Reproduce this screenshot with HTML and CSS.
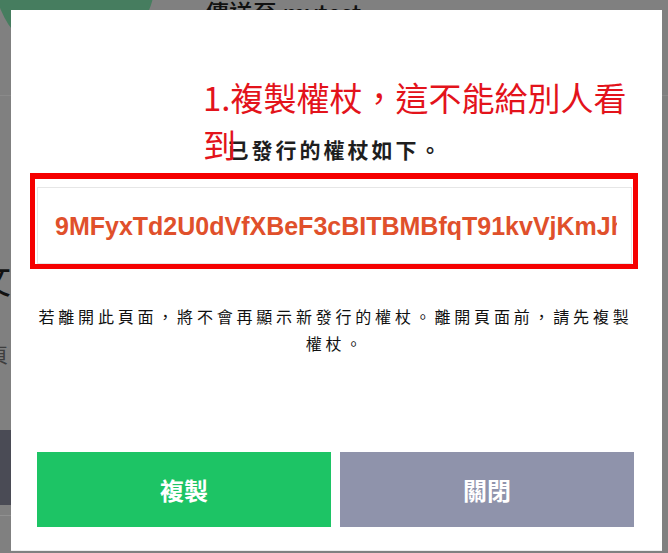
FILE: index.html
```html
<!DOCTYPE html>
<html lang="zh-Hant">
<head>
<meta charset="utf-8">
<title>權杖</title>
<link rel="stylesheet" href="styles.css">
</head>
<body>
<div class="page">
  <header class="page-head">
    <div class="avatar"></div>
    <h1 class="page-title">傳送至 mytest</h1>
  </header>
  <main class="page-body">
    <div class="big">文</div>
    <div class="sub">頁</div>
    <div class="bar"></div>
    <div class="rule"></div>
  </main>
</div>
<div class="modal">
  <h2 class="modal-title">已發行的權杖如下。</h2>
  <div class="token"><div class="token-text">9MFyxTd2U0dVfXBeF3cBITBMBfqT91kvVjKmJhQ2xLw8pZr</div></div>
  <p class="desc">若離開此頁面，將不會再顯示新發行的權杖。離開頁面前，請先複製權杖。</p>
  <div class="actions">
    <button class="btn btn-copy">複製</button>
    <button class="btn btn-close">關閉</button>
  </div>
  <p class="note">1.複製權杖，這不能給別人看<br>到</p>
  <div class="mark"></div>
</div>
</body>
</html>
```

FILE: styles.css
```css
html, body {
  margin: 0;
  padding: 0;
}
body {
  width: 668px;
  height: 553px;
  overflow: hidden;
  background: #808080;
  font-family: "Noto Sans CJK TC", "Noto Sans", sans-serif;
  position: relative;
}
.page {
  height: 553px;
}
.page-head {
  height: 95px;
  border-bottom: 1px solid #8a8a8a;
  display: flex;
  align-items: flex-start;
}
.avatar {
  flex: none;
  width: 160px;
  height: 160px;
  margin-top: -100px;
  margin-left: -5px;
  border-radius: 50%;
  background: #467d5f;
}
.page-title {
  margin: -4px 0 0 50px;
  font-size: 24px;
  line-height: 32px;
  font-weight: 500;
  color: #111;
}
.page-body {
  display: flex;
  flex-direction: column;
  padding-top: 160px;
}
.big {
  margin-left: -25px;
  font-size: 36px;
  line-height: 44px;
  color: #111;
}
.sub {
  margin: 42px 0 0 -12px;
  font-size: 20px;
  line-height: 26px;
  color: #3e3e3e;
}
.bar {
  margin-top: 62px;
  height: 75px;
  width: 40px;
  background: #4a4b55;
}
.rule {
  margin-top: 10px;
  height: 1px;
  width: 40px;
  background: #909090;
}
.modal {
  position: absolute;
  left: 11px;
  top: 10px;
  width: 651px;
  height: 541px;
  box-sizing: border-box;
  background: #fff;
  border-bottom: 1px solid #ececec;
  padding: 125px 28px 23px 26px;
  display: flex;
  flex-direction: column;
}
.modal-title {
  margin: 0;
  text-align: center;
  font-size: 21px;
  line-height: 28px;
  font-weight: bold;
  letter-spacing: 3px;
  color: #1e1e1e;
}
.token {
  margin: 24px 2px 0 0;
  height: 77px;
  box-sizing: border-box;
  border: 1px solid #e6e6e6;
  padding: 0 14px 0 17px;
  display: flex;
  align-items: center;
}
.token-text {
  width: 100%;
  overflow: hidden;
  white-space: nowrap;
  font-family: "Liberation Sans", Arial, sans-serif;
  font-weight: bold;
  font-size: 25px;
  line-height: 30px;
  color: #e0502b;
}
.desc {
  margin: 39px 0 0;
  text-align: center;
  font-size: 16px;
  line-height: 27px;
  letter-spacing: 3.8px;
  color: #111;
}
.actions {
  margin-top: auto;
  display: flex;
  gap: 9px;
}
.btn {
  flex: 1;
  height: 75px;
  border: 0;
  padding: 0;
  font-family: "Noto Sans CJK TC", "Noto Sans", sans-serif;
  font-size: 24px;
  font-weight: bold;
  color: #fff;
}
.btn-copy {
  background: #1dc465;
}
.btn-close {
  background: #8f93ab;
}
.note {
  position: absolute;
  left: 192px;
  top: 64px;
  margin: 0;
  font-size: 33px;
  line-height: 47px;
  color: #e3131b;
  z-index: 2;
}
.mark {
  position: absolute;
  left: 19px;
  top: 163px;
  width: 608px;
  height: 96px;
  box-sizing: border-box;
  border: 5px solid #f50000;
  border-top-width: 6px;
}
```
